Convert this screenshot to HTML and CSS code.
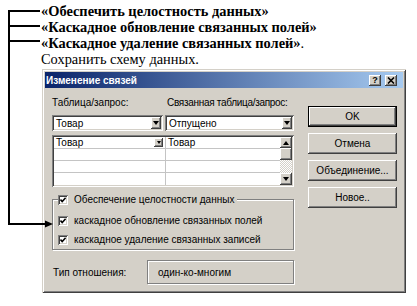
FILE: index.html
```html
<!DOCTYPE html>
<html lang="ru">
<head>
    <meta charset="UTF-8">
    <title>Изменение связей</title>
    <link rel="stylesheet" href="styles.css">
</head>
<body>
    <div class="page">
        <!-- скобка со стрелкой слева -->
        <svg class="bracket" width="60" height="240" viewBox="0 0 60 240">
            <path d="M9 11 V224 M8 11 H40 M8 26 H40 M8 41 H40 M8 224 H47" stroke="#000" stroke-width="2" fill="none"/>
            <polygon points="45,220.5 53,224 45,227.5" fill="#000"/>
        </svg>

        <div class="notes">
            <p><b>«Обеспечить целостность данных»</b></p>
            <p><b>«Каскадное обновление связанных полей»</b></p>
            <p><b>«Каскадное удаление связанных полей»</b>.</p>
            <p>Сохранить схему данных.</p>
        </div>

        <div class="dialog">
            <div class="titlebar">
                <span class="title">Изменение связей</span>
                <div class="caps">
                    <span class="cap-btn">?</span>
                    <span class="cap-btn">
                        <svg width="8" height="7" viewBox="0 0 8 7"><path d="M1 0.5 L7 6.5 M7 0.5 L1 6.5" stroke="#000" stroke-width="1.6"/></svg>
                    </span>
                </div>
            </div>

            <div class="dlg-body">
                <div class="main">
                    <div class="labels">
                        <span>Таблица/запрос:</span>
                        <span class="lbl2">Связанная таблица/запрос:</span>
                    </div>
                    <div class="combos">
                        <div class="combo c1"><span class="combo-text">Товар</span><span class="drop"><i class="tri"></i></span></div>
                        <div class="combo c2"><span class="combo-text">Отпущено</span><span class="drop"><i class="tri"></i></span></div>
                    </div>

                    <div class="grid">
                        <div class="cells">
                            <div class="grow">
                                <div class="gcell first"><span>Товар</span><span class="mini-drop"><i class="tri small"></i></span></div>
                                <div class="gcell">Товар</div>
                            </div>
                            <div class="grow"><div class="gcell"></div><div class="gcell"></div></div>
                            <div class="grow"><div class="gcell"></div><div class="gcell"></div></div>
                            <div class="grow last"><div class="gcell"></div><div class="gcell"></div></div>
                        </div>
                        <div class="scroll">
                            <span class="sb-btn up"><i class="tri upw"></i></span>
                            <span class="sb-thumb"></span>
                            <span class="sb-track"></span>
                            <span class="sb-btn down"><i class="tri"></i></span>
                        </div>
                    </div>

                    <fieldset class="group">
                        <legend>
                            <span class="chk"><svg width="6" height="6" viewBox="0 0 6 6"><path d="M0.5 2.6 L2.2 4.6 L5.6 0.8" stroke="#000" stroke-width="1.5" fill="none"/></svg></span>
                            Обеспечение целостности данных
                        </legend>
                        <div class="opt">
                            <span class="chk"><svg width="6" height="6" viewBox="0 0 6 6"><path d="M0.5 2.6 L2.2 4.6 L5.6 0.8" stroke="#000" stroke-width="1.5" fill="none"/></svg></span>
                            каскадное обновление связанных полей
                        </div>
                        <div class="opt">
                            <span class="chk"><svg width="6" height="6" viewBox="0 0 6 6"><path d="M0.5 2.6 L2.2 4.6 L5.6 0.8" stroke="#000" stroke-width="1.5" fill="none"/></svg></span>
                            каскадное удаление связанных записей
                        </div>
                    </fieldset>

                    <div class="type-row">
                        <span class="type-lbl">Тип отношения:</span>
                        <div class="type-box">один-ко-многим</div>
                    </div>
                </div>

                <div class="buttons">
                    <div class="btn default">OK</div>
                    <div class="btn">Отмена</div>
                    <div class="btn">Объединение...</div>
                    <div class="btn">Новое..</div>
                </div>
            </div>
        </div>
    </div>
</body>
</html>
```

FILE: styles.css
```css
*{
    margin: 0;
    padding: 0;
    box-sizing: border-box;
}
body{
    background: #fff;
    font-family: "Liberation Sans", Arial, sans-serif;
    color: #000;
}
.page{
    position: relative;
    width: 417px;
    height: 306px;
    overflow: hidden;
}
.bracket{
    position: absolute;
    left: 0;
    top: 0;
    z-index: 2;
}
.notes{
    padding: 3px 0 0 41px;
    font-family: "Liberation Serif", "Times New Roman", serif;
    font-size: 14.4px;
    line-height: 16px;
}

/* окно диалога */
.dialog{
    margin: 2px 0 0 42px;
    width: 364px;
    height: 224px;
    padding: 3px;
    background: #d4d0c8;
    box-shadow: inset 1px 1px #d4d0c8, inset -1px -1px #404040,
                inset 2px 2px #fff, inset -2px -2px #808080;
}
.titlebar{
    height: 16px;
    display: flex;
    align-items: center;
    justify-content: space-between;
    padding: 0 6px 0 1px;
    background: linear-gradient(to right, #0a246a, #a6caf0);
}
.title{
    color: #fff;
    font-weight: bold;
    font-size: 10px;
}
.caps{
    display: flex;
    gap: 4px;
}
.cap-btn{
    width: 12px;
    height: 11px;
    display: flex;
    align-items: center;
    justify-content: center;
    background: #d4d0c8;
    font-size: 9px;
    font-weight: bold;
    box-shadow: inset -1px -1px #404040, inset 1px 1px #fff,
                inset -2px -2px #808080;
}

.dlg-body{
    display: flex;
    gap: 14px;
    padding: 8px 6px 0 7px;
    font-size: 10px;
}
.main{
    width: 242px;
}
.labels{
    display: grid;
    grid-template-columns: 115px 1fr;
    line-height: 13px;
    white-space: nowrap;
}
.lbl2{
    letter-spacing: -0.3px;
}

/* поля со списком */
.combos{
    display: flex;
    gap: 2px;
    margin-top: 6px;
}
.combo{
    height: 16px;
    padding: 2px;
    display: flex;
    align-items: center;
    background: #fff;
    box-shadow: inset 1px 1px #808080, inset -1px -1px #fff,
                inset 2px 2px #404040, inset -2px -2px #d4d0c8;
}
.c1{
    width: 111px;
}
.c2{
    flex: 1;
}
.combo-text{
    flex: 1;
    padding-left: 2px;
}
.drop, .mini-drop, .sb-btn{
    display: flex;
    align-items: center;
    justify-content: center;
    background: #d4d0c8;
    box-shadow: inset -1px -1px #404040, inset 1px 1px #fff,
                inset -2px -2px #808080;
}
.drop{
    width: 10px;
    height: 12px;
}
.tri{
    width: 0;
    height: 0;
    border-left: 3px solid transparent;
    border-right: 3px solid transparent;
    border-top: 4px solid #000;
}
.tri.small{
    border-left-width: 2.5px;
    border-right-width: 2.5px;
    border-top-width: 3px;
}
.tri.upw{
    border-top: 0;
    border-bottom: 4px solid #000;
}

/* таблица полей */
.grid{
    margin-top: 4px;
    height: 52px;
    padding: 2px;
    display: flex;
    background: #fff;
    box-shadow: inset 1px 1px #808080, inset -1px -1px #fff,
                inset 2px 2px #404040, inset -2px -2px #d4d0c8;
}
.cells{
    flex: 1;
}
.grow{
    display: grid;
    grid-template-columns: 112px 1fr;
    height: 12px;
    border-bottom: 1px solid #c4c4c4;
}
.grow.last{
    border-bottom: 0;
}
.gcell{
    border-right: 1px solid #c4c4c4;
    padding-left: 2px;
    line-height: 11px;
}
.gcell:last-child{
    border-right: 0;
}
.gcell.first{
    display: flex;
    align-items: center;
    justify-content: space-between;
    padding-right: 2px;
}
.mini-drop{
    width: 9px;
    height: 9px;
}
.scroll{
    width: 12px;
    display: flex;
    flex-direction: column;
}
.sb-btn{
    height: 11px;
}
.sb-btn.down{
    height: 12px;
}
.sb-thumb{
    height: 12px;
    background: #d4d0c8;
    box-shadow: inset -1px -1px #404040, inset 1px 1px #fff,
                inset -2px -2px #808080;
}
.sb-track{
    flex: 1;
    background: repeating-conic-gradient(#d4d0c8 0 25%, #fff 0 50%) 0 0 / 2px 2px;
}

/* группа флажков */
.group{
    margin-top: 6px;
    padding: 5px 0 0 5px;
    border: 1px solid #808080;
    box-shadow: inset 1px 1px #fff, 1px 1px #fff;
}
.group legend{
    display: flex;
    align-items: center;
    gap: 6px;
    height: 13px;
    padding-right: 3px;
    background: #d4d0c8;
}
.opt{
    height: 19px;
    display: flex;
    align-items: center;
    gap: 6px;
}
.chk{
    width: 10px;
    height: 10px;
    display: inline-flex;
    align-items: center;
    justify-content: center;
    background: #fff;
    box-shadow: inset 1px 1px #808080, inset -1px -1px #fff,
                inset 2px 2px #404040, inset -2px -2px #d4d0c8;
}

.type-row{
    margin-top: 10px;
    display: flex;
    align-items: center;
}
.type-lbl{
    width: 95px;
    padding-left: 1px;
}
.type-box{
    flex: 1;
    height: 24px;
    display: flex;
    align-items: center;
    padding-left: 10px;
    border: 1px solid #808080;
    box-shadow: inset 1px 1px #fff, 1px 1px #fff;
}

/* кнопки справа */
.buttons{
    width: 89px;
    padding-top: 10px;
}
.btn{
    height: 21px;
    margin-bottom: 6px;
    display: flex;
    align-items: center;
    justify-content: center;
    box-shadow: inset -1px -1px #404040, inset 1px 1px #fff,
                inset -2px -2px #808080;
}
.btn.default{
    border: 1px solid #000;
}
```
